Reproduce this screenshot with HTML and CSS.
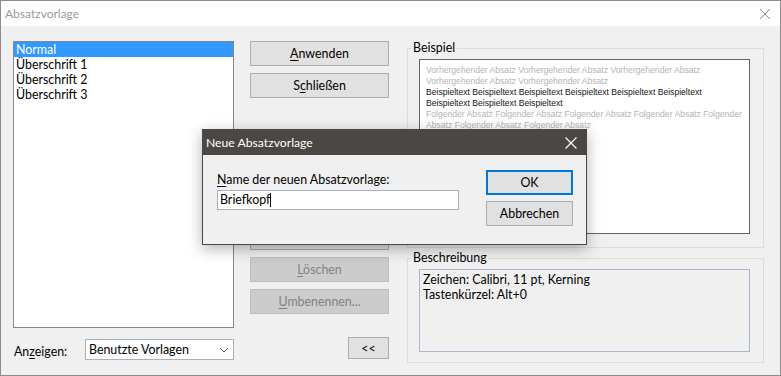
FILE: index.html
```
<!DOCTYPE html>
<html lang="de">

<head>
    <meta charset="utf-8">
    <title>Absatzvorlage</title>
    <link rel="stylesheet" href="styles.css">
</head>

<body>
    <div class="fenster">
        <div class="titel">
            <span>Absatzvorlage</span>
            <svg class="schliessen" width="12" height="12" viewBox="0 0 12 12">
                <path d="M1 1 L11 11 M11 1 L1 11" stroke="#8a8a8a" stroke-width="1" fill="none" />
            </svg>
        </div>
        <div class="inhalt">
            <div class="links">
                <ul class="liste">
                    <li class="valgt">Normal</li>
                    <li>Überschrift 1</li>
                    <li>Überschrift 2</li>
                    <li>Überschrift 3</li>
                </ul>
                <div class="anzeigen">
                    <span class="etikett">An<u>z</u>eigen:</span>
                    <div class="auswahl">
                        <span>Benutzte Vorlagen</span>
                        <svg width="10" height="6" viewBox="0 0 10 6">
                            <path d="M1 1 L5 5 L9 1" stroke="#555" stroke-width="1" fill="none" />
                        </svg>
                    </div>
                </div>
            </div>
            <div class="mitte">
                <button class="knap"><u>A</u>nwenden</button>
                <button class="knap">S<u>c</u>hließen</button>
                <button class="knap skjult">Neu...</button>
                <button class="knap inaktiv"><u>L</u>öschen</button>
                <button class="knap inaktiv"><u>U</u>mbenennen...</button>
                <button class="knap lille">&lt;&lt;</button>
            </div>
            <div class="rechts">
                <fieldset class="gruppe beispiel">
                    <legend>Beispiel</legend>
                    <div class="vorschau">
                        <p class="grau">Vorhergehender Absatz Vorhergehender Absatz Vorhergehender Absatz Vorhergehender Absatz Vorhergehender Absatz</p>
                        <p class="dunkel">Beispieltext Beispieltext Beispieltext Beispieltext Beispieltext Beispieltext Beispieltext Beispieltext Beispieltext</p>
                        <p class="grau">Folgender Absatz Folgender Absatz Folgender Absatz Folgender Absatz Folgender Absatz Folgender Absatz Folgender Absatz</p>
                    </div>
                </fieldset>
                <fieldset class="gruppe beschreibung">
                    <legend>Beschreibung</legend>
                    <div class="info">
                        <p>Zeichen: Calibri, 11 pt, Kerning</p>
                        <p>Tastenkürzel: Alt+0</p>
                    </div>
                </fieldset>
            </div>
        </div>

        <div class="dialog">
            <div class="dialog-titel">
                <span>Neue Absatzvorlage</span>
                <svg width="12" height="12" viewBox="0 0 12 12">
                    <path d="M0.5 0.5 L11.5 11.5 M11.5 0.5 L0.5 11.5" stroke="#fff" stroke-width="1.2" fill="none" />
                </svg>
            </div>
            <div class="dialog-inhalt">
                <div class="felt">
                    <label><u>N</u>ame der neuen Absatzvorlage:</label>
                    <div class="input">Briefkopf<span class="markoer"></span></div>
                </div>
                <div class="dialog-knapper">
                    <button class="knap ok">OK</button>
                    <button class="knap">Abbrechen</button>
                </div>
            </div>
        </div>
    </div>
</body>

</html>
```
FILE: styles.css
```
* {
    box-sizing: border-box;
}

body {
    margin: 0;
    font-family: Lato, 'Noto Sans', sans-serif;
    font-size: 12.4px;
    color: #000;
    background-color: #fff;
}

u {
    text-decoration-thickness: 1px;
    text-underline-offset: 2px;
}

.fenster {
    position: relative;
    width: 781px;
    height: 376px;
    border: 1px solid #8c8c8c;
    background-color: #f0f0f0;
    overflow: hidden;
}

.titel {
    height: 25px;
    background-color: #fff;
    display: flex;
    align-items: center;
    justify-content: space-between;
    padding: 0 9px 0 4px;
    color: #9a9a9a;
    font-size: 12px;
}

.inhalt {
    display: grid;
    grid-template-columns: 221px 139px 359px;
    column-gap: 16px;
    padding: 15px 0 0 12px;
}

.rechts {
    margin-left: 2px;
}

/* linke spalte */

.liste {
    list-style: none;
    margin: 0;
    padding: 0;
    height: 287px;
    border: 1px solid #828790;
    background-color: #fff;
    line-height: 15px;
}

.liste li {
    padding-left: 2px;
}

.liste .valgt {
    background-color: #3399ff;
    color: #fff;
}

.anzeigen {
    display: flex;
    align-items: center;
    margin-top: 11px;
}

.etikett {
    width: 72px;
    padding-left: 1px;
    padding-top: 3px;
}

.auswahl {
    width: 149px;
    height: 21px;
    border: 1px solid #a5b2c4;
    background-color: #fff;
    display: flex;
    align-items: center;
    justify-content: space-between;
    padding: 0 4px 0 3px;
}

/* knapper */

.mitte {
    display: flex;
    flex-direction: column;
    align-items: flex-end;
    gap: 7px;
}

.knap {
    width: 139px;
    height: 25px;
    border: 1px solid #adadad;
    background-color: #e1e1e1;
    font-family: Lato, 'Noto Sans', sans-serif;
    font-size: 12.4px;
    color: #000;
    padding: 0;
}

.skjult {
    margin-top: 120px;
}

.inaktiv {
    background-color: #cccccc;
    border-color: #bfbfbf;
    color: #838383;
}

.lille {
    width: 41px;
    height: 22px;
    margin-top: 16px;
}

/* rechte spalte */

.gruppe {
    margin: 0;
    border: 1px solid #dcdcdc;
    padding: 0 13px 0 11px;
}

.gruppe legend {
    margin-left: -8px;
    padding: 0 2px;
    line-height: 14px;
}

.beispiel {
    height: 207px;
}

.vorschau {
    margin-top: 4px;
    height: 175px;
    border: 1px solid #646464;
    background-color: #fff;
    padding: 5px 6px;
    font-family: 'Liberation Sans', sans-serif;
    font-size: 8.6px;
    line-height: 11px;
}

.vorschau p {
    margin: 0;
}

.grau {
    color: #b4b4b4;
}

.dunkel {
    color: #141414;
}

.beschreibung {
    margin-top: 3px;
    height: 112px;
}

.info {
    margin-top: 4px;
    height: 83px;
    border: 1px solid #a9b8cf;
    padding: 2px 3px;
    line-height: 15px;
}

.info p {
    margin: 0;
}

/* dialog oben drauf */

.dialog {
    position: absolute;
    left: 201px;
    top: 128px;
    width: 385px;
    height: 116px;
    border: 1px solid #4a4744;
    background-color: #f0f0f0;
    box-shadow: 0 4px 14px rgba(0, 0, 0, 0.3);
}

.dialog-titel {
    height: 25px;
    background-color: #4a4744;
    color: #fff;
    display: flex;
    align-items: center;
    justify-content: space-between;
    padding: 0 9px 0 3px;
    font-size: 12.2px;
}

.dialog-inhalt {
    display: flex;
    justify-content: space-between;
    padding: 15px 13px 0 14px;
}

.felt {
    padding-top: 2px;
}

.felt label {
    display: block;
    line-height: 16px;
}

.input {
    margin-top: 2px;
    width: 242px;
    height: 20px;
    border: 1px solid #a5b2c4;
    background-color: #fff;
    padding: 0 2px;
    line-height: 18px;
    display: flex;
    align-items: center;
}

.markoer {
    display: inline-block;
    width: 1px;
    height: 14px;
    background-color: #000;
}

.dialog-knapper {
    display: flex;
    flex-direction: column;
    gap: 6px;
}

.dialog-knapper .knap {
    width: 87px;
}

.ok {
    border: 2px solid #0078d7;
}
```
